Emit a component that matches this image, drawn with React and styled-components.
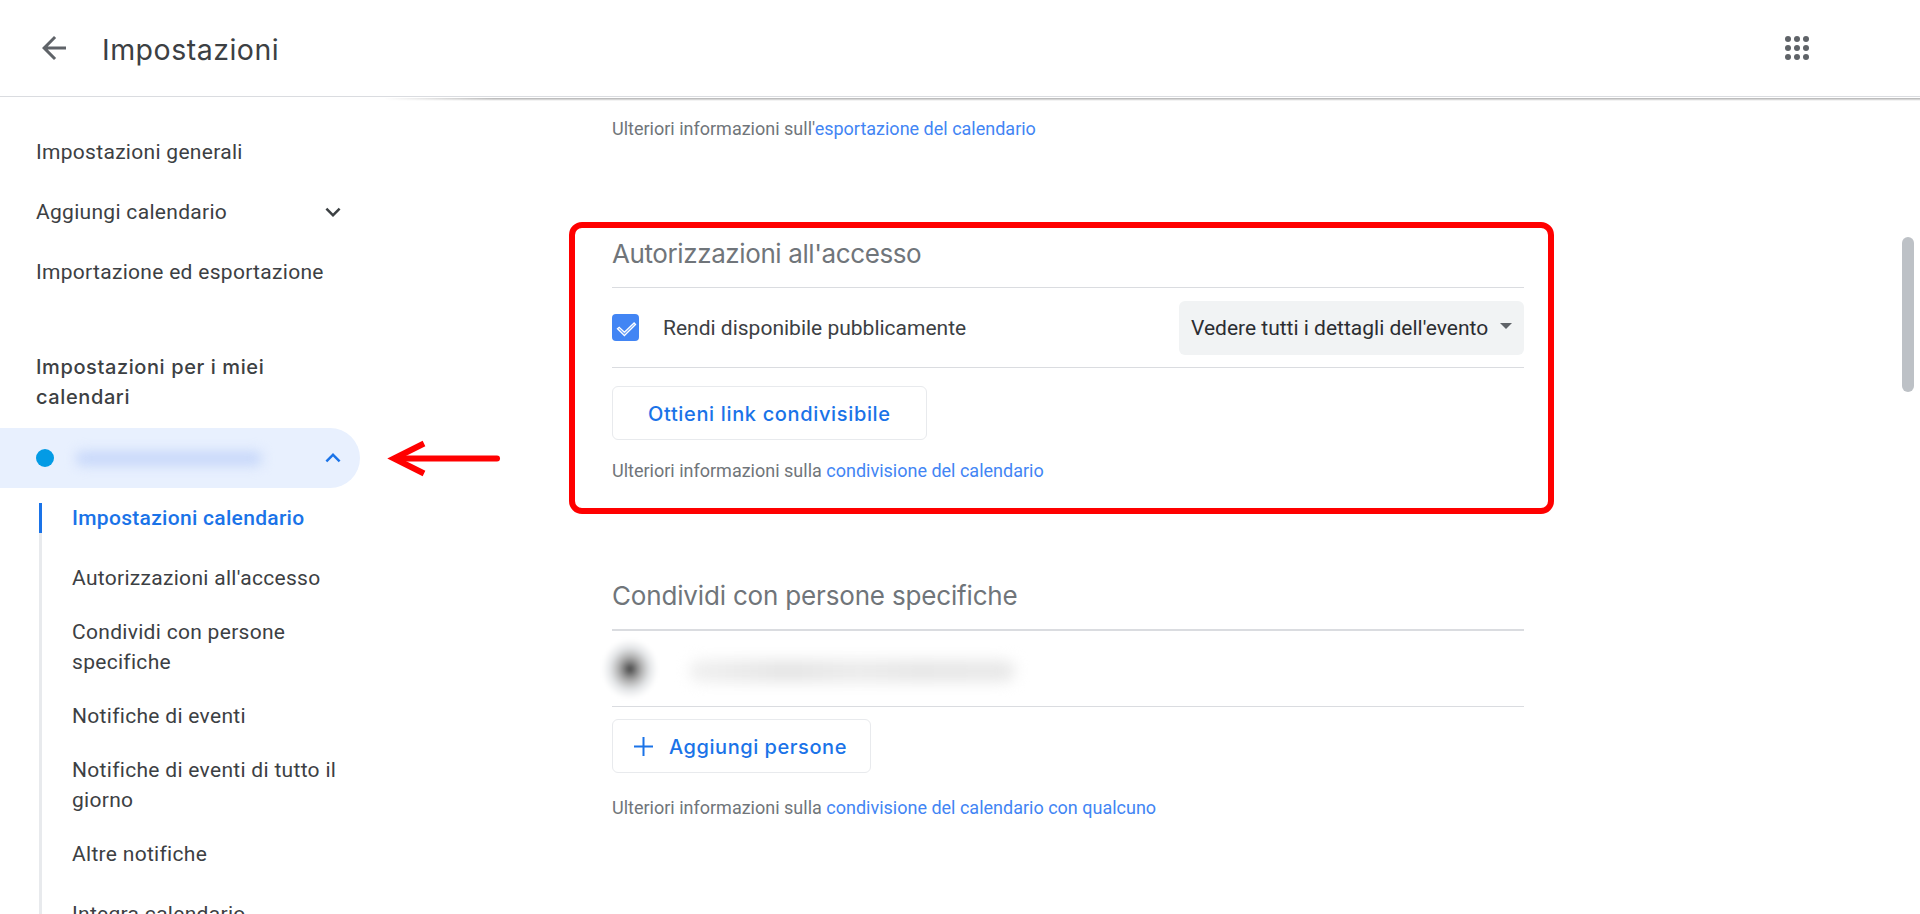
import React from "react";
import styled, { createGlobalStyle } from "styled-components";

const GlobalStyle = createGlobalStyle`
  *, *::before, *::after { box-sizing: border-box; }
  html, body { margin: 0; height: 100%; overflow: hidden; background: #fff; }
  body { font-family: Roboto, "Liberation Sans", sans-serif; color: #3c4043; }
  button { margin: 0; font: inherit; cursor: pointer; }
  a { color: #4285f4; text-decoration: none; }
`;

const display = `"Inter", "Liberation Sans", sans-serif`;

const Page = styled.div`
  display: flex;
  flex-direction: column;
  height: 914px;
  overflow: hidden;
  position: relative;
`;

const Header = styled.header`
  display: flex;
  align-items: center;
  flex: none;
  height: 97px;
  padding: 0 111px 0 36px;
  border-bottom: 1px solid #dadce0;
`;

const IconButton = styled.button`
  display: flex;
  padding: 0;
  border: 0;
  background: none;
  color: #5f6368;
`;

const PageTitle = styled.h1`
  flex: 1;
  margin: 4px 0 0 30px;
  font: 400 28.5px/36px ${display};
  letter-spacing: 0.5px;
  color: #3c4043;
`;

const Body = styled.div`
  display: flex;
  flex: 1;
  min-height: 0;
`;

const Sidebar = styled.nav`
  flex: none;
  width: 384px;
  padding-top: 25px;
  overflow: hidden;
`;

const NavRow = styled.a`
  display: flex;
  align-items: center;
  justify-content: space-between;
  width: 360px;
  height: 60px;
  padding: 0 12px 0 36px;
  border-radius: 0 30px 30px 0;
  font-size: 21px;
  line-height: 30px;
  letter-spacing: 0.3px;
  color: ${(p) => (p.$active ? "#1a73e8" : "#3c4043")};
  background: ${(p) => (p.$active ? "#e8f0fe" : "transparent")};
`;

const GroupTitle = styled.h2`
  width: 300px;
  margin: 50px 0 16px 36px;
  font: 500 20px/30px ${display};
  letter-spacing: 0.6px;
`;

const Dot = styled.span`
  flex: none;
  width: 18px;
  height: 18px;
  border-radius: 50%;
  background: #039be5;
`;

const HiddenName = styled.span`
  flex: 1;
  height: 15px;
  margin: 0 56px 0 23px;
  border-radius: 5px;
  background: repeating-linear-gradient(90deg, #c3d4f9 0 9px, #d2e0fb 9px 14px);
  filter: blur(6px);
`;

const SubList = styled.ul`
  list-style: none;
  margin: 15px 0 0 39px;
  padding: 0;
`;

const SubItem = styled.li`
  width: 310px;
  padding: 0 8px ${(p) => p.$gap}px 30px;
  border-left: 3px solid #e8eaed;
  border-image: ${(p) =>
    p.$active ? "linear-gradient(#1a73e8 30px, #e8eaed 30px) 0 0 0 3" : "none"};
  font-size: 21px;
  line-height: 30px;
  letter-spacing: 0.3px;
  font-weight: ${(p) => (p.$active ? 500 : 400)};
  color: ${(p) => (p.$active ? "#1a73e8" : "#3c4043")};
`;

const Main = styled.main`
  flex: 1;
  min-width: 0;
  overflow: hidden;
`;

const ScrollShadow = styled.div`
  height: 3px;
  margin-top: 1px;
  background: linear-gradient(#bdbdbd 0 1px, #d6d6d6 1px 2px, #f3f3f3 2px 3px);
  mask-image: linear-gradient(90deg, transparent, #000 110px);
`;

const Content = styled.div`
  width: 912px;
  margin-left: 228px;
`;

const HelpText = styled.p`
  margin: ${(p) => p.$top}px 0 0;
  font-size: 18px;
  line-height: 24px;
  color: #70757a;
  white-space: nowrap;
`;

const Section = styled.section`
  margin-top: ${(p) => p.$top}px;
`;

const SectionTitle = styled.h2`
  margin: 0;
  padding-bottom: 15px;
  font: 400 26px/36px ${display};
  letter-spacing: ${(p) => p.$spacing || 0}px;
  color: #70757a;
  border-bottom: ${(p) => p.$rule || 1}px solid #dadce0;
`;

const SettingRow = styled.div`
  display: flex;
  align-items: center;
  height: ${(p) => p.$height}px;
  border-bottom: 1px solid #dadce0;
`;

const Checkbox = styled.span`
  display: flex;
  width: 27px;
  height: 27px;
  border-radius: 4px;
  background: #4285f4;
`;

const CheckLabel = styled.span`
  flex: 1;
  margin-left: 24px;
  font-size: 21px;
  line-height: 30px;
`;

const Select = styled.button`
  display: flex;
  align-items: center;
  justify-content: space-between;
  width: 345px;
  height: 54px;
  padding: 0 12px 0 12px;
  border: 0;
  border-radius: 6px;
  background: #f1f3f4;
  font-size: 21px;
  color: #2b2d31;
  white-space: nowrap;
`;

const Caret = styled.i`
  margin-top: -4px;
  border: 6px solid transparent;
  border-top-color: #5f6368;
  border-bottom: 0;
`;

const OutlineButton = styled.button`
  display: flex;
  align-items: center;
  width: ${(p) => p.$width}px;
  height: 54px;
  margin-top: ${(p) => p.$top}px;
  padding: 2px 0 0 ${(p) => p.$inset}px;
  border: 1px solid #e8eaed;
  border-radius: 6px;
  background: #fff;
  color: #1a73e8;
  font: 500 20px/30px ${display};
  letter-spacing: ${(p) => p.$spacing}px;
  white-space: nowrap;
  svg { margin: -2px 16px 0 0; }
`;

const Avatar = styled.span`
  width: 56px;
  height: 60px;
  margin: 0 0 0 -10px;
  background: radial-gradient(closest-side, #3a3a3a 0, #777 18%, #b4b4b4 42%, #e4e6e8 70%, #fff);
  filter: blur(2px);
`;

const HiddenMail = styled.span`
  width: 326px;
  height: 22px;
  margin: 4px 0 0 31px;
  border-radius: 10px;
  background: linear-gradient(90deg, #f0f0f0, #e4e4e4 30%, #ebebeb 52%, #e6e6e6 70%, #e9e9e9);
  filter: blur(7px);
`;

const ScrollThumb = styled.div`
  position: absolute;
  top: 237px;
  right: 6px;
  width: 12px;
  height: 155px;
  border-radius: 6px;
  background: #bdc1c6;
`;

const Highlight = styled.div`
  position: absolute;
  left: 569px;
  top: 222px;
  width: 985px;
  height: 292px;
  border: 6px solid #f00;
  border-radius: 13px;
  pointer-events: none;
`;

const Pointer = styled.svg`
  position: absolute;
  left: 386px;
  top: 438px;
`;

const BackIcon = () => (
  <svg width="36" height="36" viewBox="0 0 24 24" fill="currentColor">
    <path d="M20 11H7.83l5.59-5.59L12 4l-8 8 8 8 1.41-1.41L7.83 13H20v-2z" />
  </svg>
);

const AppsIcon = () => (
  <svg width="24" height="24" viewBox="0 0 24 24" fill="currentColor">
    {[3, 12, 21].map((y) => [3, 12, 21].map((x) => <circle key={x + "-" + y} cx={x} cy={y} r="3" />))}
  </svg>
);

const Chevron = ({ up }) => (
  <svg width="30" height="30" viewBox="0 0 24 24" fill="currentColor">
    <path
      d={
        up
          ? "M12 8l-6 6 1.41 1.41L12 10.83l4.59 4.58L18 14z"
          : "M16.59 8.59L12 13.17 7.41 8.59 6 10l6 6 6-6z"
      }
    />
  </svg>
);

const CheckIcon = () => (
  <svg width="27" height="27" viewBox="0 0 27 27" fill="#fff" fillOpacity="0.25" stroke="#fff" strokeWidth="1.3">
    <path d="M5.5 14.8l1.7-1.5 5.2 4.9L22.1 9l1.4 1.4-11.1 11.2z" />
  </svg>
);

const PlusIcon = () => (
  <svg width="19" height="19" viewBox="0 0 19 19" fill="none" stroke="currentColor" strokeWidth="2">
    <path d="M9.5 0v19M0 9.5h19" />
  </svg>
);

const subItems = [
  { text: "Impostazioni calendario", gap: 30, active: true },
  { text: "Autorizzazioni all'accesso", gap: 24 },
  { text: "Condividi con persone specifiche", gap: 24 },
  { text: "Notifiche di eventi", gap: 24 },
  { text: "Notifiche di eventi di tutto il giorno", gap: 24 },
  { text: "Altre notifiche", gap: 30 },
  { text: "Integra calendario", gap: 30 },
];

export default function App() {
  return (
    <Page>
      <GlobalStyle />
      <Header>
        <IconButton aria-label="Indietro"><BackIcon /></IconButton>
        <PageTitle>Impostazioni</PageTitle>
        <IconButton aria-label="App"><AppsIcon /></IconButton>
      </Header>
      <Body>
        <Sidebar>
          <NavRow>Impostazioni generali</NavRow>
          <NavRow>Aggiungi calendario<Chevron /></NavRow>
          <NavRow>Importazione ed esportazione</NavRow>
          <GroupTitle>Impostazioni per i miei calendari</GroupTitle>
          <NavRow $active>
            <Dot />
            <HiddenName />
            <Chevron up />
          </NavRow>
          <SubList>
            {subItems.map((item) => (
              <SubItem key={item.text} $gap={item.gap} $active={item.active}>
                {item.text}
              </SubItem>
            ))}
          </SubList>
        </Sidebar>
        <Main>
          <ScrollShadow />
          <Content>
            <HelpText $top={16}>
              Ulteriori informazioni sull'<a>esportazione del calendario</a>
            </HelpText>
            <Section $top={95}>
              <SectionTitle $spacing={-0.4}>Autorizzazioni all'accesso</SectionTitle>
              <SettingRow $height={80}>
                <Checkbox><CheckIcon /></Checkbox>
                <CheckLabel>Rendi disponibile pubblicamente</CheckLabel>
                <Select>Vedere tutti i dettagli dell'evento<Caret /></Select>
              </SettingRow>
              <OutlineButton $width={315} $top={18} $inset={35} $spacing={0.65}>
                Ottieni link condivisibile
              </OutlineButton>
              <HelpText $top={19}>
                Ulteriori informazioni sulla <a>condivisione del calendario</a>
              </HelpText>
            </Section>
            <Section $top={95}>
              <SectionTitle $rule={2} $spacing={-0.17}>Condividi con persone specifiche</SectionTitle>
              <SettingRow $height={76}>
                <Avatar />
                <HiddenMail />
              </SettingRow>
              <OutlineButton $width={259} $top={12} $inset={21} $spacing={0.55}>
                <PlusIcon />
                Aggiungi persone
              </OutlineButton>
              <HelpText $top={23}>
                Ulteriori informazioni sulla <a>condivisione del calendario con qualcuno</a>
              </HelpText>
            </Section>
          </Content>
        </Main>
      </Body>
      <ScrollThumb />
      <Highlight />
      <Pointer width="116" height="42" viewBox="0 0 116 42" fill="none" stroke="#f00" strokeWidth="6">
        <path d="M12 20.5h99" strokeLinecap="round" />
        <path d="M38 5.5L8 20.5l30 15" strokeMiterlimit="10" />
      </Pointer>
    </Page>
  );
}
